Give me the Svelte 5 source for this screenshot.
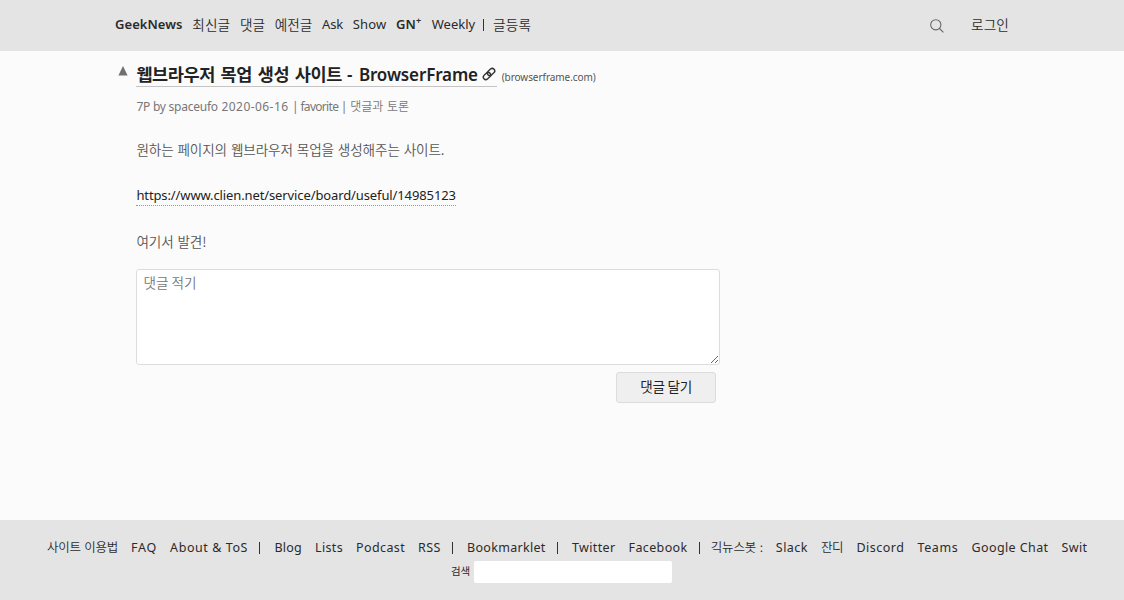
<script>
  const nav = [
    { t: 'GeekNews', w: 67.5, b: true },
    { t: '최신글', w: 38, k: true },
    { t: '댓글', w: 25, k: true },
    { t: '예전글', w: 37.5, k: true },
    { t: 'Ask', w: 21 },
    { t: 'Show', w: 33.5 },
    { t: 'GN', w: 26, b: true, plus: true },
    { t: 'Weekly', w: 43.5 },
    { sep: true },
    { t: '글등록', w: 38, k: true }
  ];
  const links = [
    { t: '사이트 이용법', w: 71, k: true },
    { t: 'FAQ', w: 26 },
    { t: 'About & ToS', w: 78 },
    { sep: true },
    { t: 'Blog', w: 27.5 },
    { t: 'Lists', w: 28 },
    { t: 'Podcast', w: 49 },
    { t: 'RSS', w: 22.5 },
    { sep: true },
    { t: 'Bookmarklet', w: 78.5 },
    { sep: true },
    { t: 'Twitter', w: 43.5 },
    { t: 'Facebook', w: 59 },
    { sep: true, tight: true },
    { t: '긱뉴스봇 :', w: 52, k: true },
    { t: 'Slack', w: 32 },
    { t: '잔디', w: 22.5, k: true },
    { t: 'Discord', w: 48 },
    { t: 'Teams', w: 41 },
    { t: 'Google Chat', w: 77 },
    { t: 'Swit', w: 26 }
  ];

  // Spreads the letters of a label over its column width.
  function fit(node, width) {
    const range = document.createRange();
    range.selectNodeContents(node);
    const natural = range.getBoundingClientRect().width;
    const count = node.textContent.length;
    node.style.letterSpacing = (width - natural) / count + 'px';
    node.style.width = width + 'px';
  }
</script>

<div class="page">
  <header>
    <nav>
      {#each nav as n}
        {#if n.sep}
          <i class="bar"></i>
        {:else if n.plus}
          <a class="bold plus" href="#top"><span use:fit={20}>{n.t}</span><sup>+</sup></a>
        {:else}
          <a class:bold={n.b} class:ko={n.k} href="#top" use:fit={n.w}>{n.t}</a>
        {/if}
      {/each}
    </nav>
    <div class="account">
      <svg width="14" height="14" viewBox="0 0 14 14" fill="none" stroke="#686868" stroke-width="1.1">
        <circle cx="5.8" cy="5.8" r="5.1" />
        <path d="M9.5 9.5 13.4 13.4" />
      </svg>
      <a class="ko" href="#login" use:fit={38}>로그인</a>
    </div>
  </header>

  <main>
    <span class="vote"><svg width="10" height="10" viewBox="0 0 10 10"><path d="M5 0 9.6 9.5H.4Z" fill="#707070" /></svg></span>
    <article>
      <div class="title">
        <h1>
          <span class="ko" use:fit={205.5}>웹브라우저 목업 생성 사이트</span><span class="dash">-</span><span class="name" use:fit={119}>BrowserFrame</span>
          <svg class="chain" width="14" height="14" viewBox="0 0 14 14" fill="none" stroke="#333" stroke-width="1.4">
            <rect x="-4.1" y="-2.5" width="8.2" height="5" rx="2.5" transform="translate(9 5) rotate(-42)" />
            <rect x="-4.1" y="-2.5" width="8.2" height="5" rx="2.5" transform="translate(5 9) rotate(-42)" />
          </svg>
        </h1>
        <small use:fit={94}>(browserframe.com)</small>
      </div>
      <div class="meta"><span use:fit={81.5}>7P by spaceufo</span><span use:fit={67}>2020-06-16</span><span use:fit={54.5}>| favorite |</span><span class="ko" use:fit={59}>댓글과 토론</span></div>
      <p class="ko"><span use:fit={308}>원하는 페이지의 웹브라우저 목업을 생성해주는 사이트.</span></p>
      <p><a class="url" href="#link" use:fit={319.5}>https://www.clien.net/service/board/useful/14985123</a></p>
      <p class="ko"><span use:fit={70}>여기서 발견!</span></p>
      <textarea placeholder="댓글 적기"></textarea>
      <button><span use:fit={52}>댓글 달기</span></button>
    </article>
  </main>

  <footer>
    <div class="links">
      {#each links as l}
        {#if l.sep}
          <i class="bar" class:tight={l.tight}></i>
        {:else}
          <a class:ko={l.k} href="#top" use:fit={l.w}>{l.t}</a>
        {/if}
      {/each}
    </div>
    <label><span use:fit={19}>검색</span><input type="text" /></label>
  </footer>
</div>

<style>
  :global(body) { background: #fbfbfb; overflow: hidden; }
  .page {
    height: 600px;
    display: flex;
    flex-direction: column;
    font-family: "Noto Sans", "Noto Sans CJK KR", sans-serif;
    font-size: 13px;
    color: #2b2b2b;
  }
  .page * { box-sizing: border-box; }
  a { color: inherit; text-decoration: none; white-space: nowrap; }
  span, small { display: inline-block; white-space: pre; }
  .ko { font-family: "Noto Sans CJK KR", sans-serif; font-weight: 350; word-spacing: 1px; }
  header {
    height: 51px;
    flex: none;
    background: #e4e4e4;
    padding: 0 115px 3px;
    display: flex;
    align-items: center;
    justify-content: space-between;
  }
  nav, .account { display: flex; align-items: center; line-height: 20px; }
  nav { gap: 9.75px; }
  nav a { flex: none; }
  nav .ko, .account .ko { font-size: 13.6px; }
  .account svg { margin-top: 3px; }
  .bold { font-weight: 600; }
  .plus { display: flex; width: 26px; }
  sup { font-size: 9px; line-height: 14px; font-weight: 600; }
  .bar { flex: none; width: 1px; height: 12px; background: #333; }
  nav .bar { margin: 2px -0.7px 0 -2px; }
  .account { gap: 27px; }

  main { flex: 1; padding-left: 118px; display: flex; }
  .vote { width: 18.4px; padding-top: 15px; flex: none; line-height: 0; }
  article { width: 584px; display: flex; flex-direction: column; }
  .title { display: flex; align-items: baseline; margin-top: 10px; height: 26px; }
  h1 {
    margin: 0;
    width: 361px;
    height: 26px;
    border-bottom: 1px solid #c4c4c4;
    display: flex;
    align-items: baseline;
    flex: none;
    font-size: 17px;
    line-height: 26px;
    font-weight: 600;
    color: #222;
  }
  h1 .ko { font-size: 17.5px; font-weight: 700; flex: none; word-spacing: 2px; }
  .dash { width: 17px; padding-left: 5px; }
  .chain { margin-left: 4px; align-self: center; margin-top: 1px; flex: none; }
  small { margin-left: 4.3px; font-size: 10px; color: #555; }
  .meta { margin-top: 9px; height: 21px; line-height: 20px; font-size: 12px; color: #777; white-space: nowrap; display: flex; align-items: baseline; gap: 3.6px; }
  p { margin: 0; height: 23px; line-height: 23px; color: #555; }
  p.ko { font-size: 13.6px; }
  .meta + p { margin-top: 21px; }
  p + p { margin-top: 23px; }
  .url { display: inline-block; height: 22px; line-height: 22px; border-bottom: 1px dotted #999; color: #222; font-size: 13px; }
  textarea {
    margin-top: 16px;
    width: 584px;
    height: 96px;
    flex: none;
    border: 1px solid #dcdcdc;
    border-radius: 3px;
    background: #fff;
    padding: 2px 6px;
    font: 350 13.6px/20px "Noto Sans CJK KR", sans-serif;
  }
  textarea::placeholder { color: #777; }
  button {
    align-self: flex-end;
    margin: 7px 4px 0 0;
    width: 100.5px;
    height: 31px;
    padding: 0 0 4px;
    border: 1px solid #dcdcdc;
    border-radius: 3px;
    background: #efefef;
    color: #222;
    font: 400 13.6px/20px "Noto Sans CJK KR", sans-serif;
  }
  footer { height: 80px; flex: none; background: #e4e4e4; padding-top: 17px; }
  .links { display: flex; align-items: center; gap: 13.04px; height: 21px; padding-left: 47px; line-height: 20px; }
  .links a { flex: none; font-size: 12.5px; }
  .links .ko { font-size: 12.5px; margin-top: -2px; }
  .links .bar { margin: 0 1.2px 0 -1.8px; }
  .links .bar.tight { margin-right: -2px; }
  label { display: flex; align-items: center; padding-left: 451px; margin-top: 3px; font: 400 10.5px/20px "Noto Sans CJK KR", sans-serif; }
  label span { margin-top: -2px; }
  input { margin: 0 0 0 4px; width: 198px; height: 22px; border: 0; border-radius: 2px; background: #fff; }
</style>
